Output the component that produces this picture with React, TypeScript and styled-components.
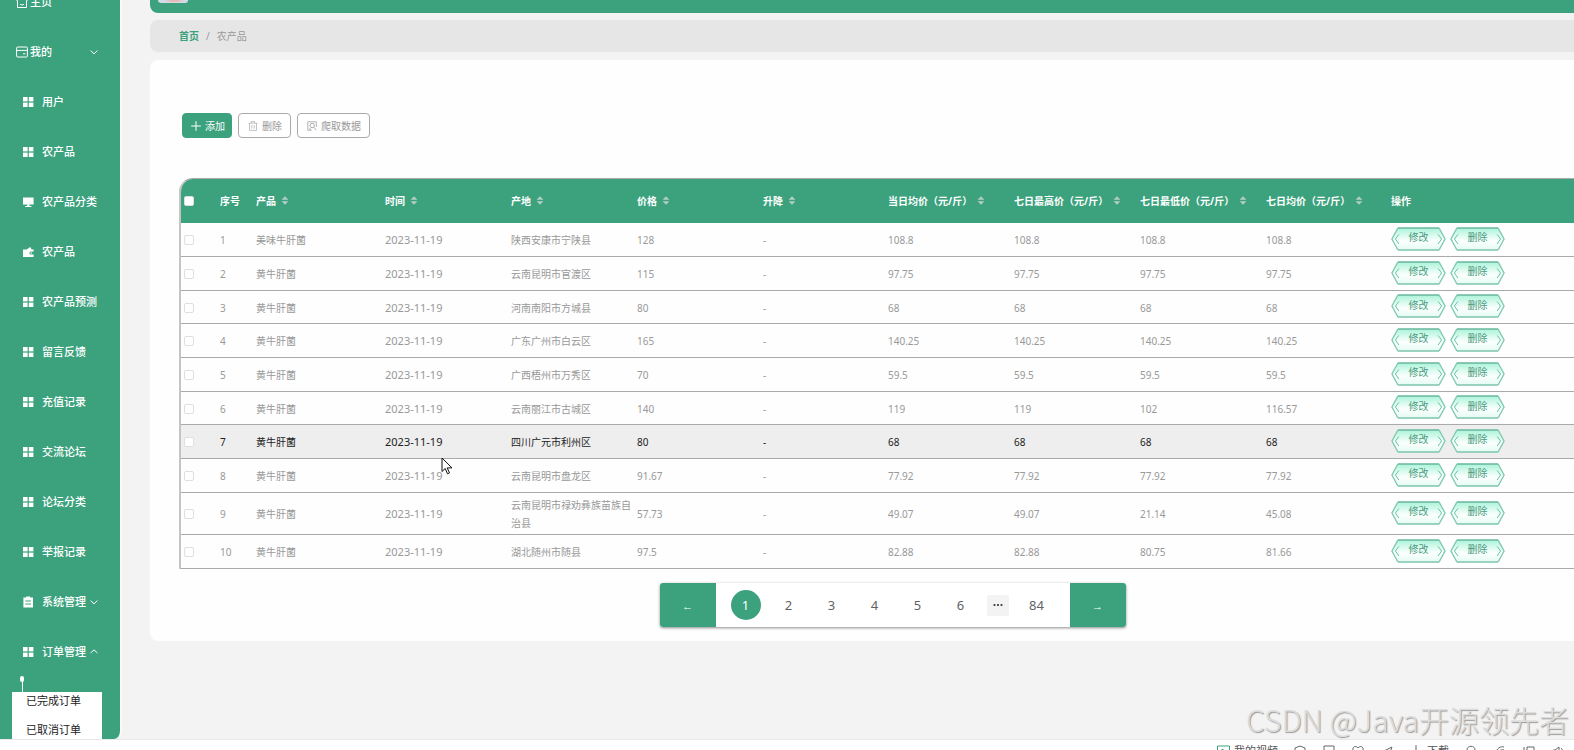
import React from "react";
import styled, { createGlobalStyle, css } from "styled-components";

const green = "#3ca27d";

const GlobalStyle = createGlobalStyle`
  *, *::before, *::after { box-sizing: border-box; }
  body {
    margin: 0;
    background: #f3f3f3;
    color: #999;
    font: 10px/18px "Noto Sans", "Noto Sans CJK SC", sans-serif;
  }
  button, input { font: inherit; color: inherit; margin: 0; }
  button { cursor: pointer; }
  a { color: inherit; text-decoration: none; }
  svg { display: block; flex: none; }
  ul, ol { list-style: none; margin: 0; padding: 0; }
`;

/* ---------- shell ---------- */

const Shell = styled.div`
  position: relative;
  display: flex;
  flex-direction: column;
  height: 100vh;
  overflow: hidden;
`;

const Body = styled.div`
  display: flex;
  flex: 1;
  min-height: 0;
  overflow: hidden;
  border-bottom: 1px solid #e9e9e9;
`;

const Sidebar = styled.nav`
  flex: none;
  width: 122px;
  background: ${green};
  border-right: 2px solid #fafafa;
  border-bottom-right-radius: 8px;
  overflow: hidden;
  color: #fff;
  font-size: 11px;
`;

/* the menu is scrolled down by part of its first entry */
const Menu = styled.ul`
  margin-top: -23px;
`;

const MenuLink = styled.a<{ $top?: boolean }>`
  display: flex;
  align-items: center;
  height: 50px;
  padding-left: ${(p) => (p.$top ? 16 : 22)}px;
  padding-right: 20px;
  gap: ${(p) => (p.$top ? 2 : 8)}px;
  font-weight: 500;
  white-space: nowrap;

  & > svg:nth-of-type(2) {
    margin-left: ${(p) => (p.$top ? "auto" : "-4px")};
    margin-right: ${(p) => (p.$top ? "2px" : "0")};
  }
`;

const SubMenu = styled.ul`
  position: relative;
  width: 90px;
  height: 60px;
  margin: 15px 0 0 12px;
  background: #fff;
  color: #222;

  &::before {
    content: "";
    position: absolute;
    left: 10px;
    top: -13px;
    width: 1px;
    height: 13px;
    background: #fff;
  }
  &::after {
    content: "";
    position: absolute;
    left: 8px;
    top: -16px;
    width: 4px;
    height: 6px;
    border-radius: 2px;
    background: #fff;
  }
`;

const SubLink = styled.a`
  display: block;
  height: 29px;
  padding-left: 14px;
`;

/* wider than the window: the right end of the page runs off the screen */
const Main = styled.main`
  flex: none;
  width: calc(100% - 61px);
  padding-left: 28px;
  display: flex;
  flex-direction: column;
`;

const Banner = styled.header`
  height: 13px;
  padding-left: 8px;
  background: ${green};
  border-radius: 0 0 8px 8px;
`;

const Avatar = styled.div`
  width: 30px;
  height: 3px;
  border: solid #d6dbe4;
  border-width: 0 1px 1px;
  border-radius: 0 0 8px 8px;
  background: linear-gradient(90deg, #cfdcea 0 20%, #e9b9b4 45% 65%, #cfdcea 90%);
`;

const Crumbs = styled.nav`
  display: flex;
  align-items: center;
  gap: 7px;
  height: 32px;
  margin-top: 7px;
  padding-left: 29px;
  background: #e6e6e6;
  border-radius: 8px;

  a { color: ${green}; font-weight: 700; }
`;

const Card = styled.section`
  margin-top: 8px;
  padding: 53px 29px 14px;
  background: #fefefe;
  border-radius: 8px;
`;

const Toolbar = styled.div`
  display: flex;
  gap: 6px;
  margin: 0 0 40px 3px;
`;

const ToolButton = styled.button<{ $primary?: boolean }>`
  display: flex;
  align-items: center;
  gap: 4px;
  height: 25px;
  padding: 0 ${(p) => (p.$primary ? "6px 0 8px" : "8px 0 9px")};
  border: 1px solid ${(p) => (p.$primary ? green : "#aaa")};
  border-radius: 4px;
  background: ${(p) => (p.$primary ? green : "#fff")};
  color: ${(p) => (p.$primary ? "#fff" : "#999")};
`;

/* ---------- table ---------- */

const Table = styled.table`
  width: 100%;
  table-layout: fixed;
  border-collapse: separate;
  border-spacing: 0;
  border: 1px solid #aaa;
  border-left: 2px solid #c4c4c4;
  border-bottom: 0;
  border-radius: 14px 14px 0 0;
  overflow: hidden;
`;

const Col = styled.col<{ $w?: number }>`
  width: ${(p) => (p.$w ? `${p.$w}px` : "auto")};
`;

const Th = styled.th`
  height: 44px;
  padding: 0 4px;
  background: ${green};
  color: #fff;
  font-weight: 700;
  text-align: left;
  white-space: nowrap;

  &:first-child { padding-left: 3px; }
`;

const SortLabel = styled.span`
  display: inline-flex;
  align-items: center;
  gap: 5px;
`;

const Row = styled.tr<{ $active?: boolean }>`
  height: 34px;
  &:nth-child(3n) { height: 33px; }
  ${(p) =>
    p.$active &&
    css`
      background: #eee;
      color: #222;
    `}
`;

const Td = styled.td<{ $date?: boolean }>`
  padding: 3px 0 2px 4px;
  border-bottom: 1px solid #aaa;
  ${(p) => p.$date && "font-size: 11px;"}

  &:first-child { padding-left: 3px; }
`;

const Check = styled.input`
  appearance: none;
  display: block;
  width: 10px;
  height: 10px;
  background: #fff;
  border: 1px solid #dcdfe6;
  border-radius: 2px;
`;

const Actions = styled.div`
  display: flex;
  gap: 4px;
  padding-bottom: 3px;
`;

const ActionButton = styled.button`
  position: relative;
  width: 55px;
  height: 24px;
  padding: 0 0 3px;
  border: 0;
  background: none;
  color: #4b9c80;
  line-height: 20px;

  svg { position: absolute; inset: 0; }
  span { position: relative; }
`;

/* ---------- pagination ---------- */

const Pager = styled.div`
  display: flex;
  align-items: center;
  width: max-content;
  height: 44px;
  margin: 14px auto 0;
  border-radius: 3px;
  background: #fff;
  box-shadow: 0 1px 3px rgba(0, 0, 0, 0.45);
  overflow: hidden;
`;

const PagerStep = styled.button`
  width: 56px;
  height: 44px;
  padding: 2px 0 0;
  border: 0;
  background: ${green};
  color: #fff;
  font: 700 11px/18px "Liberation Sans", sans-serif;
`;

const PageList = styled.ol`
  display: flex;
  align-items: center;
  gap: 13px;
  padding: 0 18px 0 15px;
`;

const PageButton = styled.button<{ $current?: boolean }>`
  display: block;
  width: 30px;
  height: 30px;
  padding: 0;
  border: 0;
  border-radius: 50%;
  background: ${(p) => (p.$current ? green : "none")};
  color: ${(p) => (p.$current ? "#fff" : "#606266")};
  font-size: 13px;
`;

const MoreButton = styled.button`
  display: flex;
  align-items: center;
  justify-content: center;
  width: 22px;
  height: 21px;
  margin-left: -2px;
  padding: 0;
  border: 0;
  border-radius: 2px;
  background: #f3f3f4;
  color: #303133;
`;

/* ---------- overlays and bottom bar ---------- */

const Watermark = styled.div`
  position: absolute;
  right: 5px;
  bottom: 12px;
  color: #dcdcdc;
  font: 30px/38px "Noto Sans CJK SC", sans-serif;
  font-weight: 300;
  text-shadow: 1px 1px 1px #999;
  white-space: nowrap;
`;

const Pointer = styled.svg`
  position: absolute;
  left: 441px;
  top: 457px;
`;

const Player = styled.footer`
  display: flex;
  flex: none;
  justify-content: flex-end;
  align-items: flex-start;
  gap: 16px;
  height: 10px;
  padding: 5px 9px 0 0;
  background: #fff;
  color: #555;
  font-size: 11px;
  line-height: 12px;
  overflow: hidden;

  span { display: flex; gap: 4px; }
`;

/* ---------- icons ---------- */

const Grid = () => (
  <svg width="12" height="12" viewBox="0 0 12 12" fill="currentColor">
    <rect x="1" y="1" width="4.6" height="4.4" />
    <rect x="6.8" y="1" width="4.6" height="4.4" />
    <rect x="1" y="6.6" width="4.6" height="4.4" />
    <rect x="6.8" y="6.6" width="4.6" height="4.4" />
  </svg>
);
const Monitor = () => (
  <svg width="12" height="12" viewBox="0 0 12 12" fill="currentColor">
    <path d="M1 1.4h10.6v7.2H7.4v1.3h2v1H3.2v-1h2V8.6H1z" />
  </svg>
);
const Wallet = () => (
  <svg width="12" height="12" viewBox="0 0 12 12" fill="currentColor">
    <path d="M1 3.6h3.600L8.2 1l1.500 2.600h1.900v1.900H8.900a1.500 1.500 0 0 0 0 3h2.700V11H1z" />
    <circle cx="9.2" cy="7" r=".8" />
  </svg>
);
const Clipboard = () => (
  <svg width="12" height="12" viewBox="0 0 12 12">
    <path d="M1.4 1.6h2.8V.6h4v1H11v10H1.4z" fill="currentColor" />
    <path d="M3.4 5h5.6M3.4 8h5.6" stroke={green} />
  </svg>
);
const Home = () => (
  <svg width="12" height="12" viewBox="0 0 12 12" fill="none" stroke="currentColor">
    <path d="M.5 4.5 6 .8l5.5 3.7M1.5 4.5v7h9v-7M4 8.2c1 1 3 1 4 0" />
  </svg>
);
const Postcard = () => (
  <svg width="12" height="12" viewBox="0 0 12 12" fill="none" stroke="currentColor">
    <rect x=".6" y="1" width="10.8" height="10" rx="1" />
    <path d="M.6 4.4h10.8M7 7.8h2.4" />
  </svg>
);
const Chevron = ({ up }: { up?: boolean }) => (
  <svg width="8" height="8" viewBox="0 0 8 8" fill="none" stroke="currentColor">
    <path d={up ? "M.6 5 4 1.8 7.4 5" : "M.6 2.6 4 5.8 7.4 2.6"} />
  </svg>
);
const Plus = () => (
  <svg width="10" height="10" viewBox="0 0 10 10" stroke="currentColor">
    <path d="M5 .2v9.600M.2 5h9.600" />
  </svg>
);
const Trash = () => (
  <svg width="10" height="10" viewBox="0 0 10 10" fill="none" stroke="#bbb">
    <path d="M.5 2.2h9M3.2 2V.6h3.6V2M1.5 2.4v7h7v-7M3.8 4.2v3.4M6.2 4.2v3.4" strokeWidth=".9" />
  </svg>
);
const Crawl = () => (
  <svg width="10" height="10" viewBox="0 0 10 10" fill="none" stroke="#aaa">
    <path d="M9.3 6V.8H.8v8.4h4M3 9V7" strokeWidth=".9" />
    <circle cx="5.2" cy="4.5" r="2.2" />
    <path d="m6.8 6.2 2.6 3" />
  </svg>
);
const Sort = () => (
  <svg width="8" height="12" viewBox="0 0 8 12" fill="#b4cec5">
    <path d="M.6 4.8 4 1.200l3.400 3.600zM.6 6.200 4 9.800l3.400-3.600z" />
  </svg>
);

const ActionFrame = () => (
  <svg width="55" height="24" viewBox="0 0 56 24" preserveAspectRatio="none" fill="none">
    <defs>
      <linearGradient id="mint" x1="0" y1="0" x2="0" y2="1">
        <stop offset="0" stopColor="#a9f3d8" />
        <stop offset=".35" stopColor="#dcfbf0" />
        <stop offset=".6" stopColor="#fbfffd" />
        <stop offset="1" stopColor="#e4fbf3" />
      </linearGradient>
    </defs>
    <path d="M7 1h42l6 11-6 11H7L1 12z" fill="url(#mint)" />
    <path d="M7 1 1 12l6 11M49 1l6 11-6 11" stroke="#7fcbb0" strokeWidth="1.400" />
    <path d="M7 1h42" stroke="#69b79c" strokeWidth="1.400" />
    <path d="M7 23h42" stroke="#7cc4ab" strokeWidth="1.400" />
    <path d="m8 7.500-3.500 4.500L8 17M48 7.500l3.500 4.500L48 17" stroke="#6dbfa2" />
  </svg>
);

/* ---------- data ---------- */

const entries: { label: string; icon: React.ReactNode; chevron?: "up" | "down"; top?: boolean }[] = [
  { label: "主页", icon: <Home />, top: true },
  { label: "我的", icon: <Postcard />, chevron: "down", top: true },
  { label: "用户", icon: <Grid /> },
  { label: "农产品", icon: <Grid /> },
  { label: "农产品分类", icon: <Monitor /> },
  { label: "农产品", icon: <Wallet /> },
  { label: "农产品预测", icon: <Grid /> },
  { label: "留言反馈", icon: <Grid /> },
  { label: "充值记录", icon: <Grid /> },
  { label: "交流论坛", icon: <Grid /> },
  { label: "论坛分类", icon: <Grid /> },
  { label: "举报记录", icon: <Grid /> },
  { label: "系统管理", icon: <Clipboard />, chevron: "down" },
  { label: "订单管理", icon: <Grid />, chevron: "up" },
];

const columns = ["产品", "时间", "产地", "价格", "升降", "当日均价（元/斤）", "七日最高价（元/斤）", "七日最低价（元/斤）", "七日均价（元/斤）"];
const widths = [35, 36, 129, 126, 126, 126, 125, 126, 126, 126, 125];

const date = "2023-11-19";
const rows = [
  ["美味牛肝菌", date, "陕西安康市宁陕县", "128", "-", "108.8", "108.8", "108.8", "108.8"],
  ["黄牛肝菌", date, "云南昆明市官渡区", "115", "-", "97.75", "97.75", "97.75", "97.75"],
  ["黄牛肝菌", date, "河南南阳市方城县", "80", "-", "68", "68", "68", "68"],
  ["黄牛肝菌", date, "广东广州市白云区", "165", "-", "140.25", "140.25", "140.25", "140.25"],
  ["黄牛肝菌", date, "广西梧州市万秀区", "70", "-", "59.5", "59.5", "59.5", "59.5"],
  ["黄牛肝菌", date, "云南丽江市古城区", "140", "-", "119", "119", "102", "116.57"],
  ["黄牛肝菌", date, "四川广元市利州区", "80", "-", "68", "68", "68", "68"],
  ["黄牛肝菌", date, "云南昆明市盘龙区", "91.67", "-", "77.92", "77.92", "77.92", "77.92"],
  ["黄牛肝菌", date, "云南昆明市禄劝彝族苗族自治县", "57.73", "-", "49.07", "49.07", "21.14", "45.08"],
  ["黄牛肝菌", date, "湖北随州市随县", "97.5", "-", "82.88", "82.88", "80.75", "81.66"],
];

const playerIcons = [
  "M6 1 11 3v4c0 3-5 5-5 5S1 10 1 7V3zM4 6l1.500 1.500L8 5",
  "M1 1h10v9H1zM3 8l3-3 4 4",
  "M6 11 1 5c-1-3 3-5 5-2 2-3 6-1 5 2z",
  "M1 7 11 2 8 10 5 7z",
];
const playerIconsEnd = [
  "M2 10V5c0-5 8-5 8 0v5z",
  "M2 9c0-6 5-8 8-7M4 10c0-4 3-6 6-5",
  "M1 2v8M4 2h7v7H4z",
  "M1 5h2l4-3v8L3 8H1zM9 3c2 2 2 4 0 6",
];
const PlayerIcon = ({ d, color = "#666" }: { d: string; color?: string }) => (
  <svg width="13" height="12" viewBox="0 0 13 12" fill="none" stroke={color}>
    <path d={d} />
  </svg>
);

export default function App() {
  return (
    <Shell>
      <GlobalStyle />
      <Body>
        <Sidebar>
          <Menu>
            {entries.map((e, i) => (
              <li key={i}>
                <MenuLink href="#" $top={e.top}>
                  {e.icon}
                  {e.label}
                  {e.chevron && <Chevron up={e.chevron === "up"} />}
                </MenuLink>
              </li>
            ))}
          </Menu>
          <SubMenu>
            <li><SubLink href="#">已完成订单</SubLink></li>
            <li><SubLink href="#">已取消订单</SubLink></li>
          </SubMenu>
        </Sidebar>
        <Main>
          <Banner><Avatar /></Banner>
          <Crumbs>
            <a href="#">首页</a>
            <span>/</span>
            <span>农产品</span>
          </Crumbs>
          <Card>
            <Toolbar>
              <ToolButton $primary><Plus />添加</ToolButton>
              <ToolButton><Trash />删除</ToolButton>
              <ToolButton><Crawl />爬取数据</ToolButton>
            </Toolbar>
            <Table>
              <colgroup>
                {widths.map((w, i) => <Col key={i} $w={w} />)}
                <Col />
              </colgroup>
              <thead>
                <tr>
                  <Th><Check type="checkbox" aria-label="全选" /></Th>
                  <Th>序号</Th>
                  {columns.map((c) => (
                    <Th key={c}><SortLabel>{c}<Sort /></SortLabel></Th>
                  ))}
                  <Th>操作</Th>
                </tr>
              </thead>
              <tbody>
                {rows.map((r, i) => (
                  <Row key={i} $active={i === 6}>
                    <Td><Check type="checkbox" aria-label={`选择 ${i + 1}`} /></Td>
                    <Td>{i + 1}</Td>
                    {r.map((v, j) => <Td key={j} $date={j === 1}>{v}</Td>)}
                    <Td>
                      <Actions>
                        <ActionButton><ActionFrame /><span>修改</span></ActionButton>
                        <ActionButton><ActionFrame /><span>删除</span></ActionButton>
                      </Actions>
                    </Td>
                  </Row>
                ))}
              </tbody>
            </Table>
            <Pager>
              <PagerStep aria-label="上一页">←</PagerStep>
              <PageList>
                {[1, 2, 3, 4, 5, 6].map((n) => (
                  <li key={n}><PageButton $current={n === 1}>{n}</PageButton></li>
                ))}
                <li>
                  <MoreButton aria-label="更多">
                    <svg width="10" height="4" viewBox="0 0 10 4" fill="currentColor">
                      <circle cx="1.500" cy="2" r="1.100" />
                      <circle cx="5" cy="2" r="1.100" />
                      <circle cx="8.500" cy="2" r="1.100" />
                    </svg>
                  </MoreButton>
                </li>
                <li><PageButton>84</PageButton></li>
              </PageList>
              <PagerStep aria-label="下一页">→</PagerStep>
            </Pager>
          </Card>
        </Main>
      </Body>
      <Player>
        <span><PlayerIcon d="M.5 1h12v10H.5zM5 4l3 2-3 2z" color={green} />我的视频</span>
        {playerIcons.map((d) => <PlayerIcon key={d} d={d} />)}
        <span><PlayerIcon d="M6 0v9M3 6l3 3 3-3" />下载</span>
        {playerIconsEnd.map((d) => <PlayerIcon key={d} d={d} />)}
      </Player>
      <Watermark>CSDN @Java开源领先者</Watermark>
      <Pointer width="12" height="18" viewBox="0 0 12 18">
        <path d="M1 1v13.500l3.200-3 2.300 5.300 2-.9-2.300-5H11z" fill="#fff" stroke="#111" />
      </Pointer>
    </Shell>
  );
}
